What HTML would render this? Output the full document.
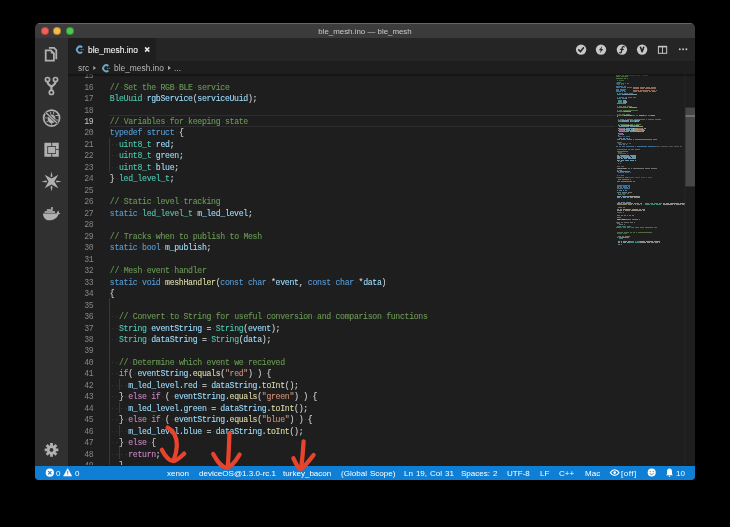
<!DOCTYPE html><html><head><meta charset="utf-8"><style>
*{margin:0;padding:0;box-sizing:border-box}
html,body{width:730px;height:527px;-webkit-font-smoothing:antialiased;background:#000000;overflow:hidden;font-family:"Liberation Sans",sans-serif}
.a{position:absolute}
#win{position:absolute;left:35px;top:22.9px;width:660px;height:457.1px;border-radius:5px 5px 4px 4px;overflow:hidden;background:#1e1e1e}
#title{left:0;top:0;width:100%;height:15.1px;background:linear-gradient(#3d3d3d,#3a3a3a);border-top:1px solid #666}
.dot{position:absolute;top:3.25px;width:7.9px;height:7.9px;border-radius:50%;border:0.6px solid rgba(0,0,0,.25)}
#act{left:0;top:15.1px;width:32.6px;height:427.6px;background:#303030}
#tabs{left:32.6px;right:0;top:15.1px;height:22.799999999999997px;background:#252525}
#tab{left:0;top:0;width:88.80px;height:100%;background:#1e1e1e}
#sb{left:0;right:0;top:442.70000000000005px;height:14.399999999999977px;background:#0f7fd5}
#ed{will-change:transform;position:absolute;left:67.6px;top:74.4px;width:627.4px;height:391.20000000000005px;overflow:hidden}
#ed .in{position:absolute;left:-67.6px;top:0;width:730px;height:600px}
#shadow{left:67.6px;top:74.4px;width:627.4px;height:3px;background:linear-gradient(rgba(0,0,0,.45),rgba(0,0,0,0))}
.lnum{position:absolute;left:53.0px;width:40px;text-align:right;height:11.475px;line-height:11.475px;font-family:"Liberation Mono",monospace;font-size:8.2px;letter-spacing:-0.310px}
.code{position:absolute;left:109.4px;height:11.475px;line-height:11.475px;font-family:"Liberation Mono",monospace;font-size:8.2px;white-space:pre;letter-spacing:-0.310px;-webkit-text-stroke:0.1px currentColor}
.code i{font-style:normal;color:#3a3a3a;-webkit-text-stroke:0}
.com{color:#6a9955} .kw{color:#569cd6} .ctl{color:#c586c0} .typ{color:#4ec9b0} .fn{color:#dcdcaa} .var{color:#9cdcfe} .str{color:#ce9178} .txt{color:#d4d4d4}
.ln{color:#858585} .lnA{color:#c6c6c6}
.guide{position:absolute;width:1px;height:11.575px;background:#383838}
#curline{position:absolute;left:108.4px;width:506.6px;height:11.475px;border-top:1px solid #2e2e2e;border-bottom:1px solid #2e2e2e}
.mm{position:absolute;opacity:.62}
.ui{will-change:transform;position:absolute;white-space:pre;line-height:1}
.sbt{will-change:transform;position:absolute;white-space:pre;color:#fff;font-size:8.05px;word-spacing:0.7px;line-height:1;top:469.80px}
</style></head><body>
<div id="win">
 <div id="title" class="a">
  <div class="dot" style="left:5.95px;background:#f5605a"></div>
  <div class="dot" style="left:18.45px;background:#f8bd48"></div>
  <div class="dot" style="left:30.95px;background:#4cc94f"></div>
 </div>
 <div id="act" class="a"></div>
 <div id="tabs" class="a"><div id="tab" class="a"></div></div>
 <div id="sb" class="a"></div>
</div>
<div class="ui" style="left:0;width:730px;text-align:center;top:27.60px;font-size:7.9px;color:#cacaca;padding-left:0px">ble_mesh.ino — ble_mesh</div>
<div class="ui" style="left:87.6px;top:45.80px;font-size:8.4px;color:#f0f0f0;-webkit-text-stroke:0.1px #fff">ble_mesh.ino</div>
<div class="ui" style="left:77.8px;top:63.70px;font-size:8.3px;color:#b8b8b8">src</div>
<div class="ui" style="left:113.8px;top:63.70px;font-size:8.4px;color:#b8b8b8">ble_mesh.ino</div>
<div class="ui" style="left:174.0px;top:63.70px;font-size:8.4px;color:#b8b8b8">...</div>
<div id="ed"><div class="in">
  <div id="curline" style="top:41.087px"></div>
  <div class="guide" style="left:108.90px;top:63.638px"></div><div class="guide" style="left:108.90px;top:75.112px"></div><div class="guide" style="left:108.90px;top:86.588px"></div><div class="guide" style="left:108.90px;top:224.287px"></div><div class="guide" style="left:108.90px;top:235.763px"></div><div class="guide" style="left:108.90px;top:247.237px"></div><div class="guide" style="left:108.90px;top:258.712px"></div><div class="guide" style="left:108.90px;top:270.188px"></div><div class="guide" style="left:108.90px;top:281.663px"></div><div class="guide" style="left:108.90px;top:293.138px"></div><div class="guide" style="left:108.90px;top:304.612px"></div><div class="guide" style="left:118.12px;top:304.612px"></div><div class="guide" style="left:108.90px;top:316.087px"></div><div class="guide" style="left:108.90px;top:327.562px"></div><div class="guide" style="left:118.12px;top:327.562px"></div><div class="guide" style="left:108.90px;top:339.038px"></div><div class="guide" style="left:108.90px;top:350.513px"></div><div class="guide" style="left:118.12px;top:350.513px"></div><div class="guide" style="left:108.90px;top:361.987px"></div><div class="guide" style="left:108.90px;top:373.462px"></div><div class="guide" style="left:118.12px;top:373.462px"></div><div class="guide" style="left:108.90px;top:384.938px"></div>
  <div class="lnum ln" style="top:-3.912px">15</div><div class="code" style="top:-3.912px"><span class="txt"></span></div><div class="lnum ln" style="top:7.563px">16</div><div class="code" style="top:7.563px"><span class="com">//<i>·</i>Set<i>·</i>the<i>·</i>RGB<i>·</i>BLE<i>·</i>service</span></div><div class="lnum ln" style="top:19.037px">17</div><div class="code" style="top:19.037px"><span class="typ">BleUuid</span><span class="txt"><i>·</i></span><span class="var">rgbService</span><span class="txt">(</span><span class="var">serviceUuid</span><span class="txt">);</span></div><div class="lnum ln" style="top:30.513px">18</div><div class="code" style="top:30.513px"></div><div class="lnum lnA" style="top:41.987px">19</div><div class="code" style="top:41.987px"><span class="com">//<i>·</i>Variables<i>·</i>for<i>·</i>keeping<i>·</i>state</span></div><div class="lnum ln" style="top:53.462px">20</div><div class="code" style="top:53.462px"><span class="kw">typedef</span><span class="txt"><i>·</i></span><span class="kw">struct</span><span class="txt"><i>·</i>{</span></div><div class="lnum ln" style="top:64.938px">21</div><div class="code" style="top:64.938px"><span class="txt"><i>·</i><i>·</i></span><span class="typ">uint8_t</span><span class="txt"><i>·</i></span><span class="var">red</span><span class="txt">;</span></div><div class="lnum ln" style="top:76.412px">22</div><div class="code" style="top:76.412px"><span class="txt"><i>·</i><i>·</i></span><span class="typ">uint8_t</span><span class="txt"><i>·</i></span><span class="var">green</span><span class="txt">;</span></div><div class="lnum ln" style="top:87.888px">23</div><div class="code" style="top:87.888px"><span class="txt"><i>·</i><i>·</i></span><span class="typ">uint8_t</span><span class="txt"><i>·</i></span><span class="var">blue</span><span class="txt">;</span></div><div class="lnum ln" style="top:99.362px">24</div><div class="code" style="top:99.362px"><span class="txt">}<i>·</i></span><span class="typ">led_level_t</span><span class="txt">;</span></div><div class="lnum ln" style="top:110.837px">25</div><div class="code" style="top:110.837px"></div><div class="lnum ln" style="top:122.313px">26</div><div class="code" style="top:122.313px"><span class="com">//<i>·</i>Static<i>·</i>level<i>·</i>tracking</span></div><div class="lnum ln" style="top:133.787px">27</div><div class="code" style="top:133.787px"><span class="kw">static</span><span class="txt"><i>·</i></span><span class="typ">led_level_t</span><span class="txt"><i>·</i></span><span class="var">m_led_level</span><span class="txt">;</span></div><div class="lnum ln" style="top:145.263px">28</div><div class="code" style="top:145.263px"></div><div class="lnum ln" style="top:156.737px">29</div><div class="code" style="top:156.737px"><span class="com">//<i>·</i>Tracks<i>·</i>when<i>·</i>to<i>·</i>publish<i>·</i>to<i>·</i>Mesh</span></div><div class="lnum ln" style="top:168.213px">30</div><div class="code" style="top:168.213px"><span class="kw">static</span><span class="txt"><i>·</i></span><span class="kw">bool</span><span class="txt"><i>·</i></span><span class="var">m_publish</span><span class="txt">;</span></div><div class="lnum ln" style="top:179.688px">31</div><div class="code" style="top:179.688px"></div><div class="lnum ln" style="top:191.162px">32</div><div class="code" style="top:191.162px"><span class="com">//<i>·</i>Mesh<i>·</i>event<i>·</i>handler</span></div><div class="lnum ln" style="top:202.638px">33</div><div class="code" style="top:202.638px"><span class="kw">static</span><span class="txt"><i>·</i></span><span class="kw">void</span><span class="txt"><i>·</i></span><span class="fn">meshHandler</span><span class="txt">(</span><span class="kw">const</span><span class="txt"><i>·</i></span><span class="kw">char</span><span class="txt"><i>·</i>*</span><span class="var">event</span><span class="txt">,<i>·</i></span><span class="kw">const</span><span class="txt"><i>·</i></span><span class="kw">char</span><span class="txt"><i>·</i>*</span><span class="var">data</span><span class="txt">)</span></div><div class="lnum ln" style="top:214.112px">34</div><div class="code" style="top:214.112px"><span class="txt">{</span></div><div class="lnum ln" style="top:225.588px">35</div><div class="code" style="top:225.588px"></div><div class="lnum ln" style="top:237.063px">36</div><div class="code" style="top:237.063px"><span class="txt"><i>·</i><i>·</i></span><span class="com">//<i>·</i>Convert<i>·</i>to<i>·</i>String<i>·</i>for<i>·</i>useful<i>·</i>conversion<i>·</i>and<i>·</i>comparison<i>·</i>functions</span></div><div class="lnum ln" style="top:248.537px">37</div><div class="code" style="top:248.537px"><span class="txt"><i>·</i><i>·</i></span><span class="typ">String</span><span class="txt"><i>·</i></span><span class="var">eventString</span><span class="txt"><i>·</i>=<i>·</i></span><span class="typ">String</span><span class="txt">(</span><span class="var">event</span><span class="txt">);</span></div><div class="lnum ln" style="top:260.012px">38</div><div class="code" style="top:260.012px"><span class="txt"><i>·</i><i>·</i></span><span class="typ">String</span><span class="txt"><i>·</i></span><span class="var">dataString</span><span class="txt"><i>·</i>=<i>·</i></span><span class="typ">String</span><span class="txt">(</span><span class="var">data</span><span class="txt">);</span></div><div class="lnum ln" style="top:271.488px">39</div><div class="code" style="top:271.488px"></div><div class="lnum ln" style="top:282.963px">40</div><div class="code" style="top:282.963px"><span class="txt"><i>·</i><i>·</i></span><span class="com">//<i>·</i>Determine<i>·</i>which<i>·</i>event<i>·</i>we<i>·</i>recieved</span></div><div class="lnum ln" style="top:294.438px">41</div><div class="code" style="top:294.438px"><span class="txt"><i>·</i><i>·</i></span><span class="ctl">if</span><span class="txt">(<i>·</i></span><span class="var">eventString</span><span class="txt">.</span><span class="fn">equals</span><span class="txt">(</span><span class="str">&quot;red&quot;</span><span class="txt">)<i>·</i>)<i>·</i>{</span></div><div class="lnum ln" style="top:305.912px">42</div><div class="code" style="top:305.912px"><span class="txt"><i>·</i><i>·</i><i>·</i><i>·</i></span><span class="var">m_led_level</span><span class="txt">.</span><span class="var">red</span><span class="txt"><i>·</i>=<i>·</i></span><span class="var">dataString</span><span class="txt">.</span><span class="fn">toInt</span><span class="txt">();</span></div><div class="lnum ln" style="top:317.387px">43</div><div class="code" style="top:317.387px"><span class="txt"><i>·</i><i>·</i>}<i>·</i></span><span class="ctl">else</span><span class="txt"><i>·</i></span><span class="ctl">if</span><span class="txt"><i>·</i>(<i>·</i></span><span class="var">eventString</span><span class="txt">.</span><span class="fn">equals</span><span class="txt">(</span><span class="str">&quot;green&quot;</span><span class="txt">)<i>·</i>)<i>·</i>{</span></div><div class="lnum ln" style="top:328.863px">44</div><div class="code" style="top:328.863px"><span class="txt"><i>·</i><i>·</i><i>·</i><i>·</i></span><span class="var">m_led_level</span><span class="txt">.</span><span class="var">green</span><span class="txt"><i>·</i>=<i>·</i></span><span class="var">dataString</span><span class="txt">.</span><span class="fn">toInt</span><span class="txt">();</span></div><div class="lnum ln" style="top:340.338px">45</div><div class="code" style="top:340.338px"><span class="txt"><i>·</i><i>·</i>}<i>·</i></span><span class="ctl">else</span><span class="txt"><i>·</i></span><span class="ctl">if</span><span class="txt"><i>·</i>(<i>·</i></span><span class="var">eventString</span><span class="txt">.</span><span class="fn">equals</span><span class="txt">(</span><span class="str">&quot;blue&quot;</span><span class="txt">)<i>·</i>)<i>·</i>{</span></div><div class="lnum ln" style="top:351.813px">46</div><div class="code" style="top:351.813px"><span class="txt"><i>·</i><i>·</i><i>·</i><i>·</i></span><span class="var">m_led_level</span><span class="txt">.</span><span class="var">blue</span><span class="txt"><i>·</i>=<i>·</i></span><span class="var">dataString</span><span class="txt">.</span><span class="fn">toInt</span><span class="txt">();</span></div><div class="lnum ln" style="top:363.287px">47</div><div class="code" style="top:363.287px"><span class="txt"><i>·</i><i>·</i>}<i>·</i></span><span class="ctl">else</span><span class="txt"><i>·</i>{</span></div><div class="lnum ln" style="top:374.762px">48</div><div class="code" style="top:374.762px"><span class="txt"><i>·</i><i>·</i><i>·</i><i>·</i></span><span class="ctl">return</span><span class="txt">;</span></div><div class="lnum ln" style="top:386.238px">49</div><div class="code" style="top:386.238px"><span class="txt"><i>·</i><i>·</i>}</span></div>
  <div class="mm" style="left:616.00px;top:1.10px;width:4.48px;height:1.0px;background:#6a9955"></div><div class="mm" style="left:621.12px;top:1.10px;width:2.56px;height:1.0px;background:#6a9955"></div><div class="mm" style="left:624.32px;top:1.10px;width:3.68px;height:1.0px;background:#6a9955"></div><div class="mm" style="left:616.00px;top:2.37px;width:1.28px;height:1.0px;background:#6a9955"></div><div class="mm" style="left:617.92px;top:2.37px;width:1.92px;height:1.0px;background:#6a9955"></div><div class="mm" style="left:620.48px;top:2.37px;width:1.92px;height:1.0px;background:#6a9955"></div><div class="mm" style="left:623.04px;top:2.37px;width:4.48px;height:1.0px;background:#6a9955"></div><div class="mm" style="left:616.00px;top:3.65px;width:1.28px;height:1.0px;background:#6a9955"></div><div class="mm" style="left:617.92px;top:3.65px;width:3.20px;height:1.0px;background:#6a9955"></div><div class="mm" style="left:621.76px;top:3.65px;width:1.28px;height:1.0px;background:#6a9955"></div><div class="mm" style="left:623.68px;top:3.65px;width:1.92px;height:1.0px;background:#6a9955"></div><div class="mm" style="left:626.24px;top:3.65px;width:1.76px;height:1.0px;background:#6a9955"></div><div class="mm" style="left:628.00px;top:1.10px;width:5.12px;height:1.0px;background:#55704a"></div><div class="mm" style="left:633.76px;top:1.10px;width:1.92px;height:1.0px;background:#55704a"></div><div class="mm" style="left:636.32px;top:1.10px;width:3.20px;height:1.0px;background:#55704a"></div><div class="mm" style="left:640.16px;top:1.10px;width:1.92px;height:1.0px;background:#55704a"></div><div class="mm" style="left:642.72px;top:1.10px;width:5.12px;height:1.0px;background:#55704a"></div><div class="mm" style="left:616.00px;top:8.60px;width:1.28px;height:1.0px;background:#6a9955"></div><div class="mm" style="left:617.92px;top:8.60px;width:1.92px;height:1.0px;background:#6a9955"></div><div class="mm" style="left:620.48px;top:8.60px;width:3.20px;height:1.0px;background:#6a9955"></div><div class="mm" style="left:624.32px;top:8.60px;width:1.28px;height:1.0px;background:#6a9955"></div><div class="mm" style="left:626.24px;top:8.60px;width:2.76px;height:1.0px;background:#6a9955"></div><div class="mm" style="left:616.00px;top:12.10px;width:1.28px;height:1.0px;background:#569cd6"></div><div class="mm" style="left:617.92px;top:12.10px;width:3.20px;height:1.0px;background:#569cd6"></div><div class="mm" style="left:621.76px;top:12.10px;width:1.28px;height:1.0px;background:#569cd6"></div><div class="mm" style="left:623.68px;top:12.10px;width:2.32px;height:1.0px;background:#569cd6"></div><div class="mm" style="left:616.00px;top:13.37px;width:3.84px;height:1.0px;background:#569cd6"></div><div class="mm" style="left:620.48px;top:13.37px;width:5.12px;height:1.0px;background:#569cd6"></div><div class="mm" style="left:616.00px;top:14.65px;width:2.56px;height:1.0px;background:#569cd6"></div><div class="mm" style="left:619.20px;top:14.65px;width:1.92px;height:1.0px;background:#569cd6"></div><div class="mm" style="left:621.76px;top:14.65px;width:3.84px;height:1.0px;background:#569cd6"></div><div class="mm" style="left:616.00px;top:15.92px;width:2.56px;height:1.0px;background:#569cd6"></div><div class="mm" style="left:619.20px;top:15.92px;width:1.92px;height:1.0px;background:#569cd6"></div><div class="mm" style="left:621.76px;top:15.92px;width:3.20px;height:1.0px;background:#569cd6"></div><div class="mm" style="left:616.00px;top:17.20px;width:4.48px;height:1.0px;background:#569cd6"></div><div class="mm" style="left:621.12px;top:17.20px;width:1.92px;height:1.0px;background:#569cd6"></div><div class="mm" style="left:623.68px;top:17.20px;width:1.92px;height:1.0px;background:#569cd6"></div><div class="mm" style="left:627.00px;top:12.60px;width:1.28px;height:1.0px;background:#888888"></div><div class="mm" style="left:628.92px;top:12.60px;width:3.08px;height:1.0px;background:#888888"></div><div class="mm" style="left:633.00px;top:13.10px;width:5.76px;height:1.0px;background:#ce9178"></div><div class="mm" style="left:639.40px;top:13.10px;width:5.12px;height:1.0px;background:#ce9178"></div><div class="mm" style="left:645.16px;top:13.10px;width:4.48px;height:1.0px;background:#ce9178"></div><div class="mm" style="left:650.28px;top:13.10px;width:5.72px;height:1.0px;background:#ce9178"></div><div class="mm" style="left:633.00px;top:14.37px;width:5.76px;height:1.0px;background:#ce9178"></div><div class="mm" style="left:639.40px;top:14.37px;width:4.48px;height:1.0px;background:#ce9178"></div><div class="mm" style="left:644.52px;top:14.37px;width:3.84px;height:1.0px;background:#ce9178"></div><div class="mm" style="left:649.00px;top:14.37px;width:3.20px;height:1.0px;background:#ce9178"></div><div class="mm" style="left:652.84px;top:14.37px;width:2.56px;height:1.0px;background:#ce9178"></div><div class="mm" style="left:633.00px;top:15.65px;width:3.20px;height:1.0px;background:#ce9178"></div><div class="mm" style="left:636.84px;top:15.65px;width:1.92px;height:1.0px;background:#ce9178"></div><div class="mm" style="left:639.40px;top:15.65px;width:3.84px;height:1.0px;background:#ce9178"></div><div class="mm" style="left:643.88px;top:15.65px;width:5.76px;height:1.0px;background:#ce9178"></div><div class="mm" style="left:650.28px;top:15.65px;width:4.48px;height:1.0px;background:#ce9178"></div><div class="mm" style="left:655.40px;top:15.65px;width:0.60px;height:1.0px;background:#ce9178"></div><div class="mm" style="left:633.00px;top:16.92px;width:3.84px;height:1.0px;background:#ce9178"></div><div class="mm" style="left:637.48px;top:16.92px;width:1.92px;height:1.0px;background:#ce9178"></div><div class="mm" style="left:640.04px;top:16.92px;width:1.92px;height:1.0px;background:#ce9178"></div><div class="mm" style="left:642.60px;top:16.92px;width:5.12px;height:1.0px;background:#ce9178"></div><div class="mm" style="left:648.36px;top:16.92px;width:2.56px;height:1.0px;background:#ce9178"></div><div class="mm" style="left:651.56px;top:16.92px;width:4.44px;height:1.0px;background:#ce9178"></div><div class="mm" style="left:617.00px;top:65.10px;width:2.56px;height:1.0px;background:#a0a0a0"></div><div class="mm" style="left:620.20px;top:65.10px;width:5.76px;height:1.0px;background:#a0a0a0"></div><div class="mm" style="left:626.60px;top:65.10px;width:5.12px;height:1.0px;background:#a0a0a0"></div><div class="mm" style="left:632.36px;top:65.10px;width:1.28px;height:1.0px;background:#a0a0a0"></div><div class="mm" style="left:634.28px;top:65.10px;width:1.92px;height:1.0px;background:#a0a0a0"></div><div class="mm" style="left:636.84px;top:65.10px;width:4.48px;height:1.0px;background:#a0a0a0"></div><div class="mm" style="left:641.96px;top:65.10px;width:4.48px;height:1.0px;background:#a0a0a0"></div><div class="mm" style="left:647.08px;top:65.10px;width:4.48px;height:1.0px;background:#a0a0a0"></div><div class="mm" style="left:652.20px;top:65.10px;width:4.80px;height:1.0px;background:#a0a0a0"></div><div class="mm" style="left:617.00px;top:67.60px;width:5.00px;height:1.0px;background:#808080"></div><div class="mm" style="left:616.00px;top:71.60px;width:1.92px;height:1.0px;background:#569cd6"></div><div class="mm" style="left:618.56px;top:71.60px;width:1.92px;height:1.0px;background:#569cd6"></div><div class="mm" style="left:621.12px;top:71.60px;width:3.84px;height:1.0px;background:#569cd6"></div><div class="mm" style="left:625.60px;top:71.60px;width:5.76px;height:1.0px;background:#569cd6"></div><div class="mm" style="left:632.00px;top:71.60px;width:1.92px;height:1.0px;background:#569cd6"></div><div class="mm" style="left:634.56px;top:71.60px;width:1.28px;height:1.0px;background:#569cd6"></div><div class="mm" style="left:636.48px;top:71.60px;width:3.84px;height:1.0px;background:#569cd6"></div><div class="mm" style="left:640.96px;top:71.60px;width:5.76px;height:1.0px;background:#569cd6"></div><div class="mm" style="left:647.36px;top:71.60px;width:3.84px;height:1.0px;background:#569cd6"></div><div class="mm" style="left:651.84px;top:71.60px;width:3.16px;height:1.0px;background:#569cd6"></div><div class="mm" style="left:655.00px;top:71.60px;width:4.48px;height:1.0px;background:#707070"></div><div class="mm" style="left:660.12px;top:71.60px;width:1.28px;height:1.0px;background:#707070"></div><div class="mm" style="left:662.04px;top:71.60px;width:5.76px;height:1.0px;background:#707070"></div><div class="mm" style="left:668.44px;top:71.60px;width:4.48px;height:1.0px;background:#707070"></div><div class="mm" style="left:673.56px;top:71.60px;width:2.56px;height:1.0px;background:#707070"></div><div class="mm" style="left:676.76px;top:71.60px;width:1.92px;height:1.0px;background:#707070"></div><div class="mm" style="left:679.32px;top:71.60px;width:2.68px;height:1.0px;background:#707070"></div><div class="mm" style="left:617.00px;top:74.60px;width:1.28px;height:1.0px;background:#6a9955"></div><div class="mm" style="left:618.92px;top:74.60px;width:3.20px;height:1.0px;background:#6a9955"></div><div class="mm" style="left:622.76px;top:74.60px;width:3.84px;height:1.0px;background:#6a9955"></div><div class="mm" style="left:627.24px;top:74.60px;width:2.56px;height:1.0px;background:#6a9955"></div><div class="mm" style="left:630.44px;top:74.60px;width:3.20px;height:1.0px;background:#6a9955"></div><div class="mm" style="left:634.28px;top:74.60px;width:5.12px;height:1.0px;background:#6a9955"></div><div class="mm" style="left:617.00px;top:76.60px;width:5.12px;height:1.0px;background:#909090"></div><div class="mm" style="left:622.76px;top:76.60px;width:5.24px;height:1.0px;background:#909090"></div><div class="mm" style="left:617.00px;top:80.60px;width:1.92px;height:1.0px;background:#9cdcfe"></div><div class="mm" style="left:619.56px;top:80.60px;width:2.56px;height:1.0px;background:#9cdcfe"></div><div class="mm" style="left:622.76px;top:80.60px;width:5.76px;height:1.0px;background:#9cdcfe"></div><div class="mm" style="left:629.16px;top:80.60px;width:5.12px;height:1.0px;background:#9cdcfe"></div><div class="mm" style="left:634.92px;top:80.60px;width:1.08px;height:1.0px;background:#9cdcfe"></div><div class="mm" style="left:617.00px;top:81.88px;width:2.56px;height:1.0px;background:#9cdcfe"></div><div class="mm" style="left:620.20px;top:81.88px;width:5.12px;height:1.0px;background:#9cdcfe"></div><div class="mm" style="left:625.96px;top:81.88px;width:3.84px;height:1.0px;background:#9cdcfe"></div><div class="mm" style="left:630.44px;top:81.88px;width:5.12px;height:1.0px;background:#9cdcfe"></div><div class="mm" style="left:617.00px;top:83.15px;width:4.48px;height:1.0px;background:#9cdcfe"></div><div class="mm" style="left:622.12px;top:83.15px;width:5.12px;height:1.0px;background:#9cdcfe"></div><div class="mm" style="left:627.88px;top:83.15px;width:3.20px;height:1.0px;background:#9cdcfe"></div><div class="mm" style="left:631.72px;top:83.15px;width:2.56px;height:1.0px;background:#9cdcfe"></div><div class="mm" style="left:634.92px;top:83.15px;width:1.08px;height:1.0px;background:#9cdcfe"></div><div class="mm" style="left:617.00px;top:84.42px;width:2.56px;height:1.0px;background:#9cdcfe"></div><div class="mm" style="left:620.20px;top:84.42px;width:2.56px;height:1.0px;background:#9cdcfe"></div><div class="mm" style="left:623.40px;top:84.42px;width:3.20px;height:1.0px;background:#9cdcfe"></div><div class="mm" style="left:627.24px;top:84.42px;width:3.20px;height:1.0px;background:#9cdcfe"></div><div class="mm" style="left:631.08px;top:84.42px;width:1.28px;height:1.0px;background:#9cdcfe"></div><div class="mm" style="left:633.00px;top:84.42px;width:3.00px;height:1.0px;background:#9cdcfe"></div><div class="mm" style="left:617.00px;top:85.70px;width:2.56px;height:1.0px;background:#9cdcfe"></div><div class="mm" style="left:620.20px;top:85.70px;width:3.84px;height:1.0px;background:#9cdcfe"></div><div class="mm" style="left:624.68px;top:85.70px;width:3.84px;height:1.0px;background:#9cdcfe"></div><div class="mm" style="left:629.16px;top:85.70px;width:1.28px;height:1.0px;background:#9cdcfe"></div><div class="mm" style="left:631.08px;top:85.70px;width:2.56px;height:1.0px;background:#9cdcfe"></div><div class="mm" style="left:634.28px;top:85.70px;width:1.72px;height:1.0px;background:#9cdcfe"></div><div class="mm" style="left:617.00px;top:93.60px;width:4.48px;height:1.0px;background:#a0a0a0"></div><div class="mm" style="left:622.12px;top:93.60px;width:4.48px;height:1.0px;background:#a0a0a0"></div><div class="mm" style="left:627.24px;top:93.60px;width:2.56px;height:1.0px;background:#a0a0a0"></div><div class="mm" style="left:630.44px;top:93.60px;width:1.28px;height:1.0px;background:#a0a0a0"></div><div class="mm" style="left:632.36px;top:93.60px;width:5.76px;height:1.0px;background:#a0a0a0"></div><div class="mm" style="left:638.76px;top:93.60px;width:5.12px;height:1.0px;background:#a0a0a0"></div><div class="mm" style="left:644.52px;top:93.60px;width:5.12px;height:1.0px;background:#a0a0a0"></div><div class="mm" style="left:650.28px;top:93.60px;width:5.12px;height:1.0px;background:#a0a0a0"></div><div class="mm" style="left:656.04px;top:93.60px;width:0.96px;height:1.0px;background:#a0a0a0"></div><div class="mm" style="left:617.00px;top:97.10px;width:1.92px;height:1.0px;background:#b0b0b0"></div><div class="mm" style="left:619.56px;top:97.10px;width:5.76px;height:1.0px;background:#b0b0b0"></div><div class="mm" style="left:625.96px;top:97.10px;width:4.04px;height:1.0px;background:#b0b0b0"></div><div class="mm" style="left:616.00px;top:102.60px;width:1.28px;height:1.0px;background:#55704a"></div><div class="mm" style="left:617.92px;top:102.60px;width:3.20px;height:1.0px;background:#55704a"></div><div class="mm" style="left:621.76px;top:102.60px;width:1.92px;height:1.0px;background:#55704a"></div><div class="mm" style="left:624.32px;top:102.60px;width:3.20px;height:1.0px;background:#55704a"></div><div class="mm" style="left:628.16px;top:102.60px;width:5.76px;height:1.0px;background:#55704a"></div><div class="mm" style="left:634.56px;top:102.60px;width:2.56px;height:1.0px;background:#55704a"></div><div class="mm" style="left:637.76px;top:102.60px;width:1.92px;height:1.0px;background:#55704a"></div><div class="mm" style="left:640.32px;top:102.60px;width:4.48px;height:1.0px;background:#55704a"></div><div class="mm" style="left:645.44px;top:102.60px;width:1.28px;height:1.0px;background:#55704a"></div><div class="mm" style="left:647.36px;top:102.60px;width:1.92px;height:1.0px;background:#55704a"></div><div class="mm" style="left:649.92px;top:102.60px;width:1.28px;height:1.0px;background:#55704a"></div><div class="mm" style="left:617.00px;top:107.10px;width:2.56px;height:1.0px;background:#a0a0a0"></div><div class="mm" style="left:620.20px;top:107.10px;width:1.92px;height:1.0px;background:#a0a0a0"></div><div class="mm" style="left:622.76px;top:107.10px;width:4.48px;height:1.0px;background:#a0a0a0"></div><div class="mm" style="left:627.88px;top:107.10px;width:1.28px;height:1.0px;background:#a0a0a0"></div><div class="mm" style="left:629.80px;top:107.10px;width:1.92px;height:1.0px;background:#a0a0a0"></div><div class="mm" style="left:632.36px;top:107.10px;width:2.64px;height:1.0px;background:#a0a0a0"></div><div class="mm" style="left:617.00px;top:110.60px;width:5.12px;height:1.0px;background:#569cd6"></div><div class="mm" style="left:622.76px;top:110.60px;width:2.56px;height:1.0px;background:#569cd6"></div><div class="mm" style="left:625.96px;top:110.60px;width:3.84px;height:1.0px;background:#569cd6"></div><div class="mm" style="left:617.00px;top:111.88px;width:4.48px;height:1.0px;background:#569cd6"></div><div class="mm" style="left:622.12px;top:111.88px;width:4.48px;height:1.0px;background:#569cd6"></div><div class="mm" style="left:627.24px;top:111.88px;width:2.76px;height:1.0px;background:#569cd6"></div><div class="mm" style="left:617.00px;top:113.15px;width:1.92px;height:1.0px;background:#569cd6"></div><div class="mm" style="left:619.56px;top:113.15px;width:1.92px;height:1.0px;background:#569cd6"></div><div class="mm" style="left:622.12px;top:113.15px;width:5.76px;height:1.0px;background:#569cd6"></div><div class="mm" style="left:628.52px;top:113.15px;width:1.48px;height:1.0px;background:#569cd6"></div><div class="mm" style="left:617.00px;top:114.42px;width:5.76px;height:1.0px;background:#569cd6"></div><div class="mm" style="left:623.40px;top:114.42px;width:5.76px;height:1.0px;background:#569cd6"></div><div class="mm" style="left:617.00px;top:117.60px;width:3.84px;height:1.0px;background:#a0a0a0"></div><div class="mm" style="left:621.48px;top:117.60px;width:1.92px;height:1.0px;background:#a0a0a0"></div><div class="mm" style="left:624.04px;top:117.60px;width:2.56px;height:1.0px;background:#a0a0a0"></div><div class="mm" style="left:627.24px;top:117.60px;width:1.92px;height:1.0px;background:#a0a0a0"></div><div class="mm" style="left:629.80px;top:117.60px;width:2.20px;height:1.0px;background:#a0a0a0"></div><div class="mm" style="left:617.00px;top:121.60px;width:3.84px;height:1.0px;background:#9cdcfe"></div><div class="mm" style="left:621.48px;top:121.60px;width:5.76px;height:1.0px;background:#9cdcfe"></div><div class="mm" style="left:627.88px;top:121.60px;width:2.56px;height:1.0px;background:#9cdcfe"></div><div class="mm" style="left:631.08px;top:121.60px;width:1.28px;height:1.0px;background:#9cdcfe"></div><div class="mm" style="left:633.00px;top:121.60px;width:3.20px;height:1.0px;background:#9cdcfe"></div><div class="mm" style="left:636.84px;top:121.60px;width:3.16px;height:1.0px;background:#9cdcfe"></div><div class="mm" style="left:617.00px;top:122.88px;width:2.56px;height:1.0px;background:#9cdcfe"></div><div class="mm" style="left:620.20px;top:122.88px;width:1.28px;height:1.0px;background:#9cdcfe"></div><div class="mm" style="left:622.12px;top:122.88px;width:3.84px;height:1.0px;background:#9cdcfe"></div><div class="mm" style="left:626.60px;top:122.88px;width:1.92px;height:1.0px;background:#9cdcfe"></div><div class="mm" style="left:629.16px;top:122.88px;width:3.84px;height:1.0px;background:#9cdcfe"></div><div class="mm" style="left:633.64px;top:122.88px;width:4.48px;height:1.0px;background:#9cdcfe"></div><div class="mm" style="left:638.76px;top:122.88px;width:1.24px;height:1.0px;background:#9cdcfe"></div><div class="mm" style="left:630.00px;top:122.10px;width:4.48px;height:1.0px;background:#ce9178"></div><div class="mm" style="left:635.12px;top:122.10px;width:0.88px;height:1.0px;background:#ce9178"></div><div class="mm" style="left:617.00px;top:128.60px;width:4.48px;height:1.0px;background:#c8b88a"></div><div class="mm" style="left:622.12px;top:128.60px;width:3.20px;height:1.0px;background:#c8b88a"></div><div class="mm" style="left:625.96px;top:128.60px;width:3.20px;height:1.0px;background:#c8b88a"></div><div class="mm" style="left:629.80px;top:128.60px;width:3.20px;height:1.0px;background:#c8b88a"></div><div class="mm" style="left:633.64px;top:128.60px;width:5.12px;height:1.0px;background:#c8b88a"></div><div class="mm" style="left:639.40px;top:128.60px;width:2.60px;height:1.0px;background:#c8b88a"></div><div class="mm" style="left:617.00px;top:129.88px;width:3.20px;height:1.0px;background:#c8b88a"></div><div class="mm" style="left:620.84px;top:129.88px;width:5.76px;height:1.0px;background:#c8b88a"></div><div class="mm" style="left:627.24px;top:129.88px;width:4.48px;height:1.0px;background:#c8b88a"></div><div class="mm" style="left:632.36px;top:129.88px;width:1.28px;height:1.0px;background:#c8b88a"></div><div class="mm" style="left:634.28px;top:129.88px;width:1.28px;height:1.0px;background:#c8b88a"></div><div class="mm" style="left:636.20px;top:129.88px;width:3.84px;height:1.0px;background:#c8b88a"></div><div class="mm" style="left:640.68px;top:129.88px;width:1.32px;height:1.0px;background:#c8b88a"></div><div class="mm" style="left:645.00px;top:128.60px;width:3.84px;height:1.0px;background:#4ec9b0"></div><div class="mm" style="left:649.48px;top:128.60px;width:3.20px;height:1.0px;background:#4ec9b0"></div><div class="mm" style="left:653.32px;top:128.60px;width:4.48px;height:1.0px;background:#4ec9b0"></div><div class="mm" style="left:658.44px;top:128.60px;width:3.56px;height:1.0px;background:#4ec9b0"></div><div class="mm" style="left:645.00px;top:129.88px;width:4.48px;height:1.0px;background:#4ec9b0"></div><div class="mm" style="left:650.12px;top:129.88px;width:4.48px;height:1.0px;background:#4ec9b0"></div><div class="mm" style="left:655.24px;top:129.88px;width:1.92px;height:1.0px;background:#4ec9b0"></div><div class="mm" style="left:657.80px;top:129.88px;width:3.20px;height:1.0px;background:#4ec9b0"></div><div class="mm" style="left:663.00px;top:128.60px;width:1.92px;height:1.0px;background:#d0d0d0"></div><div class="mm" style="left:665.56px;top:128.60px;width:3.20px;height:1.0px;background:#d0d0d0"></div><div class="mm" style="left:669.40px;top:128.60px;width:5.76px;height:1.0px;background:#d0d0d0"></div><div class="mm" style="left:675.80px;top:128.60px;width:3.20px;height:1.0px;background:#d0d0d0"></div><div class="mm" style="left:679.64px;top:128.60px;width:4.48px;height:1.0px;background:#d0d0d0"></div><div class="mm" style="left:663.00px;top:129.88px;width:3.20px;height:1.0px;background:#d0d0d0"></div><div class="mm" style="left:666.84px;top:129.88px;width:5.76px;height:1.0px;background:#d0d0d0"></div><div class="mm" style="left:673.24px;top:129.88px;width:1.28px;height:1.0px;background:#d0d0d0"></div><div class="mm" style="left:675.16px;top:129.88px;width:5.76px;height:1.0px;background:#d0d0d0"></div><div class="mm" style="left:681.56px;top:129.88px;width:3.44px;height:1.0px;background:#d0d0d0"></div><div class="mm" style="left:617.00px;top:135.10px;width:1.92px;height:1.0px;background:#d0c8a0"></div><div class="mm" style="left:619.56px;top:135.10px;width:1.92px;height:1.0px;background:#d0c8a0"></div><div class="mm" style="left:622.12px;top:135.10px;width:5.12px;height:1.0px;background:#d0c8a0"></div><div class="mm" style="left:627.88px;top:135.10px;width:3.20px;height:1.0px;background:#d0c8a0"></div><div class="mm" style="left:631.72px;top:135.10px;width:5.76px;height:1.0px;background:#d0c8a0"></div><div class="mm" style="left:638.12px;top:135.10px;width:2.56px;height:1.0px;background:#d0c8a0"></div><div class="mm" style="left:641.32px;top:135.10px;width:3.68px;height:1.0px;background:#d0c8a0"></div><div class="mm" style="left:617.00px;top:136.38px;width:4.48px;height:1.0px;background:#d0c8a0"></div><div class="mm" style="left:622.12px;top:136.38px;width:1.92px;height:1.0px;background:#d0c8a0"></div><div class="mm" style="left:624.68px;top:136.38px;width:5.12px;height:1.0px;background:#d0c8a0"></div><div class="mm" style="left:630.44px;top:136.38px;width:5.76px;height:1.0px;background:#d0c8a0"></div><div class="mm" style="left:636.84px;top:136.38px;width:5.12px;height:1.0px;background:#d0c8a0"></div><div class="mm" style="left:642.60px;top:136.38px;width:1.92px;height:1.0px;background:#d0c8a0"></div><div class="mm" style="left:617.00px;top:140.60px;width:2.56px;height:1.0px;background:#a0a0a0"></div><div class="mm" style="left:620.20px;top:140.60px;width:2.56px;height:1.0px;background:#a0a0a0"></div><div class="mm" style="left:623.40px;top:140.60px;width:2.56px;height:1.0px;background:#a0a0a0"></div><div class="mm" style="left:626.60px;top:140.60px;width:1.28px;height:1.0px;background:#a0a0a0"></div><div class="mm" style="left:628.52px;top:140.60px;width:2.56px;height:1.0px;background:#a0a0a0"></div><div class="mm" style="left:631.72px;top:140.60px;width:2.28px;height:1.0px;background:#a0a0a0"></div><div class="mm" style="left:617.00px;top:144.60px;width:2.56px;height:1.0px;background:#a0a0a0"></div><div class="mm" style="left:620.20px;top:144.60px;width:5.76px;height:1.0px;background:#a0a0a0"></div><div class="mm" style="left:626.60px;top:144.60px;width:4.48px;height:1.0px;background:#a0a0a0"></div><div class="mm" style="left:631.72px;top:144.60px;width:2.56px;height:1.0px;background:#a0a0a0"></div><div class="mm" style="left:634.92px;top:144.60px;width:2.56px;height:1.0px;background:#a0a0a0"></div><div class="mm" style="left:638.12px;top:144.60px;width:1.28px;height:1.0px;background:#a0a0a0"></div><div class="mm" style="left:616.00px;top:148.10px;width:1.28px;height:1.0px;background:#909090"></div><div class="mm" style="left:617.92px;top:148.10px;width:1.92px;height:1.0px;background:#909090"></div><div class="mm" style="left:620.48px;top:148.10px;width:2.56px;height:1.0px;background:#909090"></div><div class="mm" style="left:623.68px;top:148.10px;width:5.12px;height:1.0px;background:#909090"></div><div class="mm" style="left:629.44px;top:148.10px;width:3.20px;height:1.0px;background:#909090"></div><div class="mm" style="left:633.28px;top:148.10px;width:0.72px;height:1.0px;background:#909090"></div><div class="mm" style="left:616.00px;top:152.60px;width:1.28px;height:1.0px;background:#6a9955"></div><div class="mm" style="left:617.92px;top:152.60px;width:3.84px;height:1.0px;background:#6a9955"></div><div class="mm" style="left:622.40px;top:152.60px;width:3.20px;height:1.0px;background:#6a9955"></div><div class="mm" style="left:626.24px;top:152.60px;width:3.84px;height:1.0px;background:#6a9955"></div><div class="mm" style="left:630.72px;top:152.60px;width:3.20px;height:1.0px;background:#6a9955"></div><div class="mm" style="left:634.56px;top:152.60px;width:4.48px;height:1.0px;background:#6a9955"></div><div class="mm" style="left:639.68px;top:152.60px;width:3.84px;height:1.0px;background:#6a9955"></div><div class="mm" style="left:644.16px;top:152.60px;width:5.12px;height:1.0px;background:#6a9955"></div><div class="mm" style="left:649.92px;top:152.60px;width:2.56px;height:1.0px;background:#6a9955"></div><div class="mm" style="left:653.12px;top:152.60px;width:1.28px;height:1.0px;background:#6a9955"></div><div class="mm" style="left:655.04px;top:152.60px;width:1.96px;height:1.0px;background:#6a9955"></div><div class="mm" style="left:617.00px;top:157.60px;width:5.76px;height:1.0px;background:#6a9955"></div><div class="mm" style="left:623.40px;top:157.60px;width:5.12px;height:1.0px;background:#6a9955"></div><div class="mm" style="left:629.16px;top:157.60px;width:2.56px;height:1.0px;background:#6a9955"></div><div class="mm" style="left:632.36px;top:157.60px;width:2.56px;height:1.0px;background:#6a9955"></div><div class="mm" style="left:635.56px;top:157.60px;width:1.28px;height:1.0px;background:#6a9955"></div><div class="mm" style="left:637.48px;top:157.60px;width:5.76px;height:1.0px;background:#6a9955"></div><div class="mm" style="left:643.88px;top:157.60px;width:2.56px;height:1.0px;background:#6a9955"></div><div class="mm" style="left:647.08px;top:157.60px;width:1.28px;height:1.0px;background:#6a9955"></div><div class="mm" style="left:649.00px;top:157.60px;width:2.56px;height:1.0px;background:#6a9955"></div><div class="mm" style="left:618.00px;top:161.60px;width:2.56px;height:1.0px;background:#a0a0a0"></div><div class="mm" style="left:621.20px;top:161.60px;width:2.56px;height:1.0px;background:#a0a0a0"></div><div class="mm" style="left:624.40px;top:161.60px;width:5.60px;height:1.0px;background:#a0a0a0"></div><div class="mm" style="left:618.00px;top:166.60px;width:1.92px;height:1.0px;background:#9cdcfe"></div><div class="mm" style="left:620.56px;top:166.60px;width:1.28px;height:1.0px;background:#9cdcfe"></div><div class="mm" style="left:622.48px;top:166.60px;width:4.48px;height:1.0px;background:#9cdcfe"></div><div class="mm" style="left:627.60px;top:166.60px;width:2.40px;height:1.0px;background:#9cdcfe"></div><div class="mm" style="left:618.00px;top:167.88px;width:1.92px;height:1.0px;background:#9cdcfe"></div><div class="mm" style="left:620.56px;top:167.88px;width:1.28px;height:1.0px;background:#9cdcfe"></div><div class="mm" style="left:622.48px;top:167.88px;width:3.20px;height:1.0px;background:#9cdcfe"></div><div class="mm" style="left:626.32px;top:167.88px;width:3.20px;height:1.0px;background:#9cdcfe"></div><div class="mm" style="left:630.00px;top:166.60px;width:3.84px;height:1.0px;background:#4ec9b0"></div><div class="mm" style="left:634.48px;top:166.60px;width:1.28px;height:1.0px;background:#4ec9b0"></div><div class="mm" style="left:636.40px;top:166.60px;width:1.92px;height:1.0px;background:#4ec9b0"></div><div class="mm" style="left:638.96px;top:166.60px;width:1.04px;height:1.0px;background:#4ec9b0"></div><div class="mm" style="left:630.00px;top:167.88px;width:1.28px;height:1.0px;background:#4ec9b0"></div><div class="mm" style="left:631.92px;top:167.88px;width:1.92px;height:1.0px;background:#4ec9b0"></div><div class="mm" style="left:634.48px;top:167.88px;width:5.52px;height:1.0px;background:#4ec9b0"></div><div class="mm" style="left:640.00px;top:166.60px;width:4.48px;height:1.0px;background:#d0d0d0"></div><div class="mm" style="left:645.12px;top:166.60px;width:3.20px;height:1.0px;background:#d0d0d0"></div><div class="mm" style="left:648.96px;top:166.60px;width:3.84px;height:1.0px;background:#d0d0d0"></div><div class="mm" style="left:653.44px;top:166.60px;width:5.76px;height:1.0px;background:#d0d0d0"></div><div class="mm" style="left:640.00px;top:167.88px;width:5.76px;height:1.0px;background:#d0d0d0"></div><div class="mm" style="left:646.40px;top:167.88px;width:3.20px;height:1.0px;background:#d0d0d0"></div><div class="mm" style="left:650.24px;top:167.88px;width:3.84px;height:1.0px;background:#d0d0d0"></div><div class="mm" style="left:654.72px;top:167.88px;width:3.20px;height:1.0px;background:#d0d0d0"></div><div class="mm" style="left:658.56px;top:167.88px;width:1.44px;height:1.0px;background:#d0d0d0"></div><div class="mm" style="left:616.30px;top:6.38px;width:1.28px;height:1.0px;background:#6a9955;opacity:.5"></div><div class="mm" style="left:618.22px;top:6.38px;width:1.92px;height:1.0px;background:#6a9955;opacity:.5"></div><div class="mm" style="left:620.78px;top:6.38px;width:2.56px;height:1.0px;background:#6a9955;opacity:.5"></div><div class="mm" style="left:616.30px;top:7.65px;width:4.48px;height:1.0px;background:#4ec9b0;opacity:.5"></div><div class="mm" style="left:616.30px;top:10.20px;width:3.20px;height:1.0px;background:#569cd6;opacity:.5"></div><div class="mm" style="left:620.14px;top:10.20px;width:1.92px;height:1.0px;background:#569cd6;opacity:.5"></div><div class="mm" style="left:622.70px;top:10.20px;width:1.28px;height:1.0px;background:#569cd6;opacity:.5"></div><div class="mm" style="left:617.58px;top:62.47px;width:4.48px;height:1.0px;background:#569cd6;opacity:.5"></div><div class="mm" style="left:622.70px;top:62.47px;width:1.92px;height:1.0px;background:#569cd6;opacity:.5"></div><div class="mm" style="left:625.26px;top:62.47px;width:1.92px;height:1.0px;background:#569cd6;opacity:.5"></div><div class="mm" style="left:627.82px;top:62.47px;width:1.92px;height:1.0px;background:#569cd6;opacity:.5"></div><div class="mm" style="left:618.86px;top:63.75px;width:3.20px;height:1.0px;background:#9cdcfe;opacity:.5"></div><div class="mm" style="left:622.70px;top:63.75px;width:1.92px;height:1.0px;background:#9cdcfe;opacity:.5"></div><div class="mm" style="left:625.26px;top:63.75px;width:2.56px;height:1.0px;background:#9cdcfe;opacity:.5"></div><div class="mm" style="left:628.46px;top:63.75px;width:0.64px;height:1.0px;background:#9cdcfe;opacity:.5"></div><div class="mm" style="left:617.58px;top:68.85px;width:3.20px;height:1.0px;background:#6a9955;opacity:.5"></div><div class="mm" style="left:621.42px;top:68.85px;width:4.48px;height:1.0px;background:#6a9955;opacity:.5"></div><div class="mm" style="left:626.54px;top:68.85px;width:1.28px;height:1.0px;background:#6a9955;opacity:.5"></div><div class="mm" style="left:628.46px;top:68.85px;width:2.56px;height:1.0px;background:#6a9955;opacity:.5"></div><div class="mm" style="left:618.86px;top:70.12px;width:1.28px;height:1.0px;background:#b0b0b0;opacity:.5"></div><div class="mm" style="left:620.78px;top:70.12px;width:1.28px;height:1.0px;background:#b0b0b0;opacity:.5"></div><div class="mm" style="left:622.70px;top:70.12px;width:1.92px;height:1.0px;background:#b0b0b0;opacity:.5"></div><div class="mm" style="left:625.26px;top:70.12px;width:1.28px;height:1.0px;background:#b0b0b0;opacity:.5"></div><div class="mm" style="left:627.18px;top:70.12px;width:0.00px;height:1.0px;background:#b0b0b0;opacity:.5"></div><div class="mm" style="left:617.58px;top:77.78px;width:4.48px;height:1.0px;background:#6a9955;opacity:.5"></div><div class="mm" style="left:617.58px;top:79.05px;width:3.84px;height:1.0px;background:#569cd6;opacity:.5"></div><div class="mm" style="left:622.06px;top:79.05px;width:3.84px;height:1.0px;background:#569cd6;opacity:.5"></div><div class="mm" style="left:626.54px;top:79.05px;width:1.28px;height:1.0px;background:#569cd6;opacity:.5"></div><div class="mm" style="left:617.58px;top:86.70px;width:1.28px;height:1.0px;background:#9cdcfe;opacity:.5"></div><div class="mm" style="left:619.50px;top:86.70px;width:1.92px;height:1.0px;background:#9cdcfe;opacity:.5"></div><div class="mm" style="left:617.58px;top:89.25px;width:1.28px;height:1.0px;background:#4ec9b0;opacity:.5"></div><div class="mm" style="left:619.50px;top:89.25px;width:0.64px;height:1.0px;background:#4ec9b0;opacity:.5"></div><div class="mm" style="left:616.30px;top:91.80px;width:3.20px;height:1.0px;background:#9a9a9a;opacity:.5"></div><div class="mm" style="left:620.14px;top:91.80px;width:1.28px;height:1.0px;background:#9a9a9a;opacity:.5"></div><div class="mm" style="left:622.06px;top:91.80px;width:1.92px;height:1.0px;background:#9a9a9a;opacity:.5"></div><div class="mm" style="left:617.58px;top:94.35px;width:1.92px;height:1.0px;background:#b0b0b0;opacity:.5"></div><div class="mm" style="left:620.14px;top:94.35px;width:1.28px;height:1.0px;background:#b0b0b0;opacity:.5"></div><div class="mm" style="left:622.06px;top:94.35px;width:3.20px;height:1.0px;background:#b0b0b0;opacity:.5"></div><div class="mm" style="left:616.30px;top:95.62px;width:1.28px;height:1.0px;background:#9cdcfe;opacity:.5"></div><div class="mm" style="left:618.22px;top:95.62px;width:1.92px;height:1.0px;background:#9cdcfe;opacity:.5"></div><div class="mm" style="left:620.78px;top:95.62px;width:1.28px;height:1.0px;background:#9cdcfe;opacity:.5"></div><div class="mm" style="left:617.58px;top:98.17px;width:2.56px;height:1.0px;background:#569cd6;opacity:.5"></div><div class="mm" style="left:620.78px;top:98.17px;width:3.20px;height:1.0px;background:#569cd6;opacity:.5"></div><div class="mm" style="left:624.62px;top:98.17px;width:3.84px;height:1.0px;background:#569cd6;opacity:.5"></div><div class="mm" style="left:629.10px;top:98.17px;width:1.28px;height:1.0px;background:#569cd6;opacity:.5"></div><div class="mm" style="left:616.30px;top:100.72px;width:1.28px;height:1.0px;background:#9a9a9a;opacity:.5"></div><div class="mm" style="left:618.22px;top:100.72px;width:1.28px;height:1.0px;background:#9a9a9a;opacity:.5"></div><div class="mm" style="left:620.14px;top:100.72px;width:3.84px;height:1.0px;background:#9a9a9a;opacity:.5"></div><div class="mm" style="left:616.30px;top:103.28px;width:1.92px;height:1.0px;background:#6a9955;opacity:.5"></div><div class="mm" style="left:618.86px;top:103.28px;width:3.20px;height:1.0px;background:#6a9955;opacity:.5"></div><div class="mm" style="left:622.70px;top:103.28px;width:1.28px;height:1.0px;background:#6a9955;opacity:.5"></div><div class="mm" style="left:624.62px;top:103.28px;width:4.48px;height:1.0px;background:#6a9955;opacity:.5"></div><div class="mm" style="left:617.58px;top:104.55px;width:3.20px;height:1.0px;background:#b0b0b0;opacity:.5"></div><div class="mm" style="left:621.42px;top:104.55px;width:3.84px;height:1.0px;background:#b0b0b0;opacity:.5"></div><div class="mm" style="left:625.90px;top:104.55px;width:2.56px;height:1.0px;background:#b0b0b0;opacity:.5"></div><div class="mm" style="left:629.10px;top:104.55px;width:0.64px;height:1.0px;background:#b0b0b0;opacity:.5"></div><div class="mm" style="left:616.30px;top:116.03px;width:1.28px;height:1.0px;background:#9cdcfe;opacity:.5"></div><div class="mm" style="left:618.22px;top:116.03px;width:1.92px;height:1.0px;background:#9cdcfe;opacity:.5"></div><div class="mm" style="left:620.78px;top:116.03px;width:1.28px;height:1.0px;background:#9cdcfe;opacity:.5"></div><div class="mm" style="left:622.70px;top:116.03px;width:1.28px;height:1.0px;background:#9cdcfe;opacity:.5"></div><div class="mm" style="left:624.62px;top:116.03px;width:1.92px;height:1.0px;background:#9cdcfe;opacity:.5"></div><div class="mm" style="left:617.58px;top:118.57px;width:1.28px;height:1.0px;background:#569cd6;opacity:.5"></div><div class="mm" style="left:619.50px;top:118.57px;width:1.28px;height:1.0px;background:#569cd6;opacity:.5"></div><div class="mm" style="left:621.42px;top:118.57px;width:4.48px;height:1.0px;background:#569cd6;opacity:.5"></div><div class="mm" style="left:626.54px;top:118.57px;width:1.92px;height:1.0px;background:#569cd6;opacity:.5"></div><div class="mm" style="left:617.58px;top:119.85px;width:2.56px;height:1.0px;background:#4ec9b0;opacity:.5"></div><div class="mm" style="left:620.78px;top:119.85px;width:1.28px;height:1.0px;background:#4ec9b0;opacity:.5"></div><div class="mm" style="left:622.70px;top:119.85px;width:1.92px;height:1.0px;background:#4ec9b0;opacity:.5"></div><div class="mm" style="left:617.58px;top:127.50px;width:1.92px;height:1.0px;background:#9cdcfe;opacity:.5"></div><div class="mm" style="left:620.14px;top:127.50px;width:1.28px;height:1.0px;background:#9cdcfe;opacity:.5"></div><div class="mm" style="left:622.06px;top:127.50px;width:2.56px;height:1.0px;background:#9cdcfe;opacity:.5"></div><div class="mm" style="left:625.26px;top:127.50px;width:1.92px;height:1.0px;background:#9cdcfe;opacity:.5"></div><div class="mm" style="left:627.82px;top:127.50px;width:2.56px;height:1.0px;background:#9cdcfe;opacity:.5"></div><div class="mm" style="left:631.02px;top:127.50px;width:0.00px;height:1.0px;background:#9cdcfe;opacity:.5"></div><div class="mm" style="left:617.58px;top:132.60px;width:4.48px;height:1.0px;background:#b0b0b0;opacity:.5"></div><div class="mm" style="left:622.70px;top:132.60px;width:1.92px;height:1.0px;background:#b0b0b0;opacity:.5"></div><div class="mm" style="left:616.30px;top:137.70px;width:1.92px;height:1.0px;background:#9a9a9a;opacity:.5"></div><div class="mm" style="left:618.86px;top:137.70px;width:3.20px;height:1.0px;background:#9a9a9a;opacity:.5"></div><div class="mm" style="left:622.70px;top:137.70px;width:1.28px;height:1.0px;background:#9a9a9a;opacity:.5"></div><div class="mm" style="left:616.30px;top:142.80px;width:3.84px;height:1.0px;background:#b0b0b0;opacity:.5"></div><div class="mm" style="left:616.30px;top:145.35px;width:4.48px;height:1.0px;background:#9cdcfe;opacity:.5"></div><div class="mm" style="left:621.42px;top:145.35px;width:3.20px;height:1.0px;background:#9cdcfe;opacity:.5"></div><div class="mm" style="left:625.26px;top:145.35px;width:1.28px;height:1.0px;background:#9cdcfe;opacity:.5"></div><div class="mm" style="left:616.30px;top:149.17px;width:3.20px;height:1.0px;background:#4ec9b0;opacity:.5"></div><div class="mm" style="left:618.86px;top:150.45px;width:3.84px;height:1.0px;background:#b0b0b0;opacity:.5"></div><div class="mm" style="left:623.34px;top:150.45px;width:0.64px;height:1.0px;background:#b0b0b0;opacity:.5"></div><div class="mm" style="left:616.30px;top:151.72px;width:4.48px;height:1.0px;background:#4ec9b0;opacity:.5"></div><div class="mm" style="left:621.42px;top:151.72px;width:4.48px;height:1.0px;background:#4ec9b0;opacity:.5"></div><div class="mm" style="left:626.54px;top:151.72px;width:3.84px;height:1.0px;background:#4ec9b0;opacity:.5"></div><div class="mm" style="left:616.30px;top:159.38px;width:3.84px;height:1.0px;background:#6a9955;opacity:.5"></div><div class="mm" style="left:620.78px;top:159.38px;width:1.28px;height:1.0px;background:#6a9955;opacity:.5"></div><div class="mm" style="left:622.70px;top:159.38px;width:3.84px;height:1.0px;background:#6a9955;opacity:.5"></div><div class="mm" style="left:616.30px;top:163.20px;width:1.28px;height:1.0px;background:#9cdcfe;opacity:.5"></div><div class="mm" style="left:618.22px;top:163.20px;width:3.20px;height:1.0px;background:#9cdcfe;opacity:.5"></div><div class="mm" style="left:622.06px;top:163.20px;width:1.28px;height:1.0px;background:#9cdcfe;opacity:.5"></div><div class="mm" style="left:623.98px;top:163.20px;width:4.48px;height:1.0px;background:#9cdcfe;opacity:.5"></div><div class="mm" style="left:618.86px;top:164.47px;width:3.84px;height:1.0px;background:#4ec9b0;opacity:.5"></div><div class="mm" style="left:617.58px;top:169.57px;width:1.92px;height:1.0px;background:#9cdcfe;opacity:.5"></div><div class="mm" style="left:620.14px;top:169.57px;width:1.28px;height:1.0px;background:#9cdcfe;opacity:.5"></div><div class="mm" style="left:616.30px;top:19.12px;width:1.28px;height:1.0px;background:#6a9955"></div><div class="mm" style="left:618.22px;top:19.12px;width:1.92px;height:1.0px;background:#6a9955"></div><div class="mm" style="left:620.78px;top:19.12px;width:1.92px;height:1.0px;background:#6a9955"></div><div class="mm" style="left:623.34px;top:19.12px;width:1.92px;height:1.0px;background:#6a9955"></div><div class="mm" style="left:625.90px;top:19.12px;width:1.92px;height:1.0px;background:#6a9955"></div><div class="mm" style="left:628.46px;top:19.12px;width:4.48px;height:1.0px;background:#6a9955"></div><div class="mm" style="left:616.30px;top:20.40px;width:4.48px;height:1.0px;background:#4ec9b0"></div><div class="mm" style="left:621.42px;top:20.40px;width:6.40px;height:1.0px;background:#9cdcfe"></div><div class="mm" style="left:627.82px;top:20.40px;width:0.64px;height:1.0px;background:#d4d4d4"></div><div class="mm" style="left:628.46px;top:20.40px;width:7.04px;height:1.0px;background:#9cdcfe"></div><div class="mm" style="left:635.50px;top:20.40px;width:1.28px;height:1.0px;background:#d4d4d4"></div><div class="mm" style="left:616.30px;top:22.95px;width:1.28px;height:1.0px;background:#6a9955"></div><div class="mm" style="left:618.22px;top:22.95px;width:5.76px;height:1.0px;background:#6a9955"></div><div class="mm" style="left:624.62px;top:22.95px;width:1.92px;height:1.0px;background:#6a9955"></div><div class="mm" style="left:627.18px;top:22.95px;width:4.48px;height:1.0px;background:#6a9955"></div><div class="mm" style="left:632.30px;top:22.95px;width:3.20px;height:1.0px;background:#6a9955"></div><div class="mm" style="left:616.30px;top:24.22px;width:4.48px;height:1.0px;background:#569cd6"></div><div class="mm" style="left:621.42px;top:24.22px;width:3.84px;height:1.0px;background:#569cd6"></div><div class="mm" style="left:625.90px;top:24.22px;width:0.64px;height:1.0px;background:#d4d4d4"></div><div class="mm" style="left:617.58px;top:25.50px;width:4.48px;height:1.0px;background:#4ec9b0"></div><div class="mm" style="left:622.70px;top:25.50px;width:1.92px;height:1.0px;background:#9cdcfe"></div><div class="mm" style="left:624.62px;top:25.50px;width:0.64px;height:1.0px;background:#d4d4d4"></div><div class="mm" style="left:617.58px;top:26.78px;width:4.48px;height:1.0px;background:#4ec9b0"></div><div class="mm" style="left:622.70px;top:26.78px;width:3.20px;height:1.0px;background:#9cdcfe"></div><div class="mm" style="left:625.90px;top:26.78px;width:0.64px;height:1.0px;background:#d4d4d4"></div><div class="mm" style="left:617.58px;top:28.05px;width:4.48px;height:1.0px;background:#4ec9b0"></div><div class="mm" style="left:622.70px;top:28.05px;width:2.56px;height:1.0px;background:#9cdcfe"></div><div class="mm" style="left:625.26px;top:28.05px;width:0.64px;height:1.0px;background:#d4d4d4"></div><div class="mm" style="left:616.30px;top:29.33px;width:0.64px;height:1.0px;background:#d4d4d4"></div><div class="mm" style="left:617.58px;top:29.33px;width:7.04px;height:1.0px;background:#4ec9b0"></div><div class="mm" style="left:624.62px;top:29.33px;width:0.64px;height:1.0px;background:#d4d4d4"></div><div class="mm" style="left:616.30px;top:31.88px;width:1.28px;height:1.0px;background:#6a9955"></div><div class="mm" style="left:618.22px;top:31.88px;width:3.84px;height:1.0px;background:#6a9955"></div><div class="mm" style="left:622.70px;top:31.88px;width:3.20px;height:1.0px;background:#6a9955"></div><div class="mm" style="left:626.54px;top:31.88px;width:5.12px;height:1.0px;background:#6a9955"></div><div class="mm" style="left:616.30px;top:33.15px;width:3.84px;height:1.0px;background:#569cd6"></div><div class="mm" style="left:620.78px;top:33.15px;width:7.04px;height:1.0px;background:#4ec9b0"></div><div class="mm" style="left:628.46px;top:33.15px;width:7.04px;height:1.0px;background:#9cdcfe"></div><div class="mm" style="left:635.50px;top:33.15px;width:0.64px;height:1.0px;background:#d4d4d4"></div><div class="mm" style="left:616.30px;top:35.70px;width:1.28px;height:1.0px;background:#6a9955"></div><div class="mm" style="left:618.22px;top:35.70px;width:3.84px;height:1.0px;background:#6a9955"></div><div class="mm" style="left:622.70px;top:35.70px;width:2.56px;height:1.0px;background:#6a9955"></div><div class="mm" style="left:625.90px;top:35.70px;width:1.28px;height:1.0px;background:#6a9955"></div><div class="mm" style="left:627.82px;top:35.70px;width:4.48px;height:1.0px;background:#6a9955"></div><div class="mm" style="left:632.94px;top:35.70px;width:1.28px;height:1.0px;background:#6a9955"></div><div class="mm" style="left:634.86px;top:35.70px;width:2.56px;height:1.0px;background:#6a9955"></div><div class="mm" style="left:616.30px;top:36.97px;width:3.84px;height:1.0px;background:#569cd6"></div><div class="mm" style="left:620.78px;top:36.97px;width:2.56px;height:1.0px;background:#569cd6"></div><div class="mm" style="left:623.98px;top:36.97px;width:5.76px;height:1.0px;background:#9cdcfe"></div><div class="mm" style="left:629.74px;top:36.97px;width:0.64px;height:1.0px;background:#d4d4d4"></div><div class="mm" style="left:616.30px;top:39.53px;width:1.28px;height:1.0px;background:#6a9955"></div><div class="mm" style="left:618.22px;top:39.53px;width:2.56px;height:1.0px;background:#6a9955"></div><div class="mm" style="left:621.42px;top:39.53px;width:3.20px;height:1.0px;background:#6a9955"></div><div class="mm" style="left:625.26px;top:39.53px;width:4.48px;height:1.0px;background:#6a9955"></div><div class="mm" style="left:616.30px;top:40.80px;width:3.84px;height:1.0px;background:#569cd6"></div><div class="mm" style="left:620.78px;top:40.80px;width:2.56px;height:1.0px;background:#569cd6"></div><div class="mm" style="left:623.98px;top:40.80px;width:7.04px;height:1.0px;background:#dcdcaa"></div><div class="mm" style="left:631.02px;top:40.80px;width:0.64px;height:1.0px;background:#d4d4d4"></div><div class="mm" style="left:631.66px;top:40.80px;width:3.20px;height:1.0px;background:#569cd6"></div><div class="mm" style="left:635.50px;top:40.80px;width:2.56px;height:1.0px;background:#569cd6"></div><div class="mm" style="left:638.70px;top:40.80px;width:0.64px;height:1.0px;background:#d4d4d4"></div><div class="mm" style="left:639.34px;top:40.80px;width:3.20px;height:1.0px;background:#9cdcfe"></div><div class="mm" style="left:642.54px;top:40.80px;width:0.64px;height:1.0px;background:#d4d4d4"></div><div class="mm" style="left:643.82px;top:40.80px;width:3.20px;height:1.0px;background:#569cd6"></div><div class="mm" style="left:647.66px;top:40.80px;width:2.56px;height:1.0px;background:#569cd6"></div><div class="mm" style="left:650.86px;top:40.80px;width:0.64px;height:1.0px;background:#d4d4d4"></div><div class="mm" style="left:651.50px;top:40.80px;width:2.56px;height:1.0px;background:#9cdcfe"></div><div class="mm" style="left:654.06px;top:40.80px;width:0.64px;height:1.0px;background:#d4d4d4"></div><div class="mm" style="left:616.30px;top:42.07px;width:0.64px;height:1.0px;background:#d4d4d4"></div><div class="mm" style="left:617.58px;top:44.62px;width:1.28px;height:1.0px;background:#6a9955"></div><div class="mm" style="left:619.50px;top:44.62px;width:4.48px;height:1.0px;background:#6a9955"></div><div class="mm" style="left:624.62px;top:44.62px;width:1.28px;height:1.0px;background:#6a9955"></div><div class="mm" style="left:626.54px;top:44.62px;width:3.84px;height:1.0px;background:#6a9955"></div><div class="mm" style="left:631.02px;top:44.62px;width:1.92px;height:1.0px;background:#6a9955"></div><div class="mm" style="left:633.58px;top:44.62px;width:3.84px;height:1.0px;background:#6a9955"></div><div class="mm" style="left:638.06px;top:44.62px;width:6.40px;height:1.0px;background:#6a9955"></div><div class="mm" style="left:645.10px;top:44.62px;width:1.92px;height:1.0px;background:#6a9955"></div><div class="mm" style="left:647.66px;top:44.62px;width:6.40px;height:1.0px;background:#6a9955"></div><div class="mm" style="left:654.70px;top:44.62px;width:5.76px;height:1.0px;background:#6a9955"></div><div class="mm" style="left:617.58px;top:45.90px;width:3.84px;height:1.0px;background:#4ec9b0"></div><div class="mm" style="left:622.06px;top:45.90px;width:7.04px;height:1.0px;background:#9cdcfe"></div><div class="mm" style="left:629.74px;top:45.90px;width:0.64px;height:1.0px;background:#d4d4d4"></div><div class="mm" style="left:631.02px;top:45.90px;width:3.84px;height:1.0px;background:#4ec9b0"></div><div class="mm" style="left:634.86px;top:45.90px;width:0.64px;height:1.0px;background:#d4d4d4"></div><div class="mm" style="left:635.50px;top:45.90px;width:3.20px;height:1.0px;background:#9cdcfe"></div><div class="mm" style="left:638.70px;top:45.90px;width:1.28px;height:1.0px;background:#d4d4d4"></div><div class="mm" style="left:617.58px;top:47.17px;width:3.84px;height:1.0px;background:#4ec9b0"></div><div class="mm" style="left:622.06px;top:47.17px;width:6.40px;height:1.0px;background:#9cdcfe"></div><div class="mm" style="left:629.10px;top:47.17px;width:0.64px;height:1.0px;background:#d4d4d4"></div><div class="mm" style="left:630.38px;top:47.17px;width:3.84px;height:1.0px;background:#4ec9b0"></div><div class="mm" style="left:634.22px;top:47.17px;width:0.64px;height:1.0px;background:#d4d4d4"></div><div class="mm" style="left:634.86px;top:47.17px;width:2.56px;height:1.0px;background:#9cdcfe"></div><div class="mm" style="left:637.42px;top:47.17px;width:1.28px;height:1.0px;background:#d4d4d4"></div><div class="mm" style="left:617.58px;top:49.72px;width:1.28px;height:1.0px;background:#6a9955"></div><div class="mm" style="left:619.50px;top:49.72px;width:5.76px;height:1.0px;background:#6a9955"></div><div class="mm" style="left:625.90px;top:49.72px;width:3.20px;height:1.0px;background:#6a9955"></div><div class="mm" style="left:629.74px;top:49.72px;width:3.20px;height:1.0px;background:#6a9955"></div><div class="mm" style="left:633.58px;top:49.72px;width:1.28px;height:1.0px;background:#6a9955"></div><div class="mm" style="left:635.50px;top:49.72px;width:5.12px;height:1.0px;background:#6a9955"></div><div class="mm" style="left:617.58px;top:51.00px;width:1.28px;height:1.0px;background:#c586c0"></div><div class="mm" style="left:618.86px;top:51.00px;width:0.64px;height:1.0px;background:#d4d4d4"></div><div class="mm" style="left:620.14px;top:51.00px;width:7.04px;height:1.0px;background:#9cdcfe"></div><div class="mm" style="left:627.18px;top:51.00px;width:0.64px;height:1.0px;background:#d4d4d4"></div><div class="mm" style="left:627.82px;top:51.00px;width:3.84px;height:1.0px;background:#dcdcaa"></div><div class="mm" style="left:631.66px;top:51.00px;width:0.64px;height:1.0px;background:#d4d4d4"></div><div class="mm" style="left:632.30px;top:51.00px;width:3.20px;height:1.0px;background:#ce9178"></div><div class="mm" style="left:635.50px;top:51.00px;width:0.64px;height:1.0px;background:#d4d4d4"></div><div class="mm" style="left:636.78px;top:51.00px;width:0.64px;height:1.0px;background:#d4d4d4"></div><div class="mm" style="left:638.06px;top:51.00px;width:0.64px;height:1.0px;background:#d4d4d4"></div><div class="mm" style="left:618.86px;top:52.28px;width:7.04px;height:1.0px;background:#9cdcfe"></div><div class="mm" style="left:625.90px;top:52.28px;width:0.64px;height:1.0px;background:#d4d4d4"></div><div class="mm" style="left:626.54px;top:52.28px;width:1.92px;height:1.0px;background:#9cdcfe"></div><div class="mm" style="left:629.10px;top:52.28px;width:0.64px;height:1.0px;background:#d4d4d4"></div><div class="mm" style="left:630.38px;top:52.28px;width:6.40px;height:1.0px;background:#9cdcfe"></div><div class="mm" style="left:636.78px;top:52.28px;width:0.64px;height:1.0px;background:#d4d4d4"></div><div class="mm" style="left:637.42px;top:52.28px;width:3.20px;height:1.0px;background:#dcdcaa"></div><div class="mm" style="left:640.62px;top:52.28px;width:1.92px;height:1.0px;background:#d4d4d4"></div><div class="mm" style="left:617.58px;top:53.55px;width:0.64px;height:1.0px;background:#d4d4d4"></div><div class="mm" style="left:618.86px;top:53.55px;width:2.56px;height:1.0px;background:#c586c0"></div><div class="mm" style="left:622.06px;top:53.55px;width:1.28px;height:1.0px;background:#c586c0"></div><div class="mm" style="left:623.98px;top:53.55px;width:0.64px;height:1.0px;background:#d4d4d4"></div><div class="mm" style="left:625.26px;top:53.55px;width:7.04px;height:1.0px;background:#9cdcfe"></div><div class="mm" style="left:632.30px;top:53.55px;width:0.64px;height:1.0px;background:#d4d4d4"></div><div class="mm" style="left:632.94px;top:53.55px;width:3.84px;height:1.0px;background:#dcdcaa"></div><div class="mm" style="left:636.78px;top:53.55px;width:0.64px;height:1.0px;background:#d4d4d4"></div><div class="mm" style="left:637.42px;top:53.55px;width:4.48px;height:1.0px;background:#ce9178"></div><div class="mm" style="left:641.90px;top:53.55px;width:0.64px;height:1.0px;background:#d4d4d4"></div><div class="mm" style="left:643.18px;top:53.55px;width:0.64px;height:1.0px;background:#d4d4d4"></div><div class="mm" style="left:644.46px;top:53.55px;width:0.64px;height:1.0px;background:#d4d4d4"></div><div class="mm" style="left:618.86px;top:54.82px;width:7.04px;height:1.0px;background:#9cdcfe"></div><div class="mm" style="left:625.90px;top:54.82px;width:0.64px;height:1.0px;background:#d4d4d4"></div><div class="mm" style="left:626.54px;top:54.82px;width:3.20px;height:1.0px;background:#9cdcfe"></div><div class="mm" style="left:630.38px;top:54.82px;width:0.64px;height:1.0px;background:#d4d4d4"></div><div class="mm" style="left:631.66px;top:54.82px;width:6.40px;height:1.0px;background:#9cdcfe"></div><div class="mm" style="left:638.06px;top:54.82px;width:0.64px;height:1.0px;background:#d4d4d4"></div><div class="mm" style="left:638.70px;top:54.82px;width:3.20px;height:1.0px;background:#dcdcaa"></div><div class="mm" style="left:641.90px;top:54.82px;width:1.92px;height:1.0px;background:#d4d4d4"></div><div class="mm" style="left:617.58px;top:56.10px;width:0.64px;height:1.0px;background:#d4d4d4"></div><div class="mm" style="left:618.86px;top:56.10px;width:2.56px;height:1.0px;background:#c586c0"></div><div class="mm" style="left:622.06px;top:56.10px;width:1.28px;height:1.0px;background:#c586c0"></div><div class="mm" style="left:623.98px;top:56.10px;width:0.64px;height:1.0px;background:#d4d4d4"></div><div class="mm" style="left:625.26px;top:56.10px;width:7.04px;height:1.0px;background:#9cdcfe"></div><div class="mm" style="left:632.30px;top:56.10px;width:0.64px;height:1.0px;background:#d4d4d4"></div><div class="mm" style="left:632.94px;top:56.10px;width:3.84px;height:1.0px;background:#dcdcaa"></div><div class="mm" style="left:636.78px;top:56.10px;width:0.64px;height:1.0px;background:#d4d4d4"></div><div class="mm" style="left:637.42px;top:56.10px;width:3.84px;height:1.0px;background:#ce9178"></div><div class="mm" style="left:641.26px;top:56.10px;width:0.64px;height:1.0px;background:#d4d4d4"></div><div class="mm" style="left:642.54px;top:56.10px;width:0.64px;height:1.0px;background:#d4d4d4"></div><div class="mm" style="left:643.82px;top:56.10px;width:0.64px;height:1.0px;background:#d4d4d4"></div><div class="mm" style="left:618.86px;top:57.38px;width:7.04px;height:1.0px;background:#9cdcfe"></div><div class="mm" style="left:625.90px;top:57.38px;width:0.64px;height:1.0px;background:#d4d4d4"></div><div class="mm" style="left:626.54px;top:57.38px;width:2.56px;height:1.0px;background:#9cdcfe"></div><div class="mm" style="left:629.74px;top:57.38px;width:0.64px;height:1.0px;background:#d4d4d4"></div><div class="mm" style="left:631.02px;top:57.38px;width:6.40px;height:1.0px;background:#9cdcfe"></div><div class="mm" style="left:637.42px;top:57.38px;width:0.64px;height:1.0px;background:#d4d4d4"></div><div class="mm" style="left:638.06px;top:57.38px;width:3.20px;height:1.0px;background:#dcdcaa"></div><div class="mm" style="left:641.26px;top:57.38px;width:1.92px;height:1.0px;background:#d4d4d4"></div><div class="mm" style="left:617.58px;top:58.65px;width:0.64px;height:1.0px;background:#d4d4d4"></div><div class="mm" style="left:618.86px;top:58.65px;width:2.56px;height:1.0px;background:#c586c0"></div><div class="mm" style="left:622.06px;top:58.65px;width:0.64px;height:1.0px;background:#d4d4d4"></div><div class="mm" style="left:618.86px;top:59.92px;width:3.84px;height:1.0px;background:#c586c0"></div><div class="mm" style="left:622.70px;top:59.92px;width:0.64px;height:1.0px;background:#d4d4d4"></div><div class="mm" style="left:617.58px;top:61.20px;width:0.64px;height:1.0px;background:#d4d4d4"></div>
</div></div>
<div id="shadow" class="a"></div>
<div class="sbt" style="left:56.3px">0</div><div class="sbt" style="left:74.7px">0</div><div class="sbt" style="left:167.0px">xenon</div><div class="sbt" style="left:198.6px">deviceOS@1.3.0-rc.1</div><div class="sbt" style="left:283.4px">turkey_bacon</div><div class="sbt" style="left:341.2px">(Global Scope)</div><div class="sbt" style="left:403.9px">Ln 19, Col 31</div><div class="sbt" style="left:461.2px">Spaces: 2</div><div class="sbt" style="left:506.8px">UTF-8</div><div class="sbt" style="left:540.1px">LF</div><div class="sbt" style="left:559.0px">C++</div><div class="sbt" style="left:584.8px">Mac</div><div class="sbt" style="left:621.3px;letter-spacing:0.5px">[off]</div><div class="sbt" style="left:676.2px">10</div>

<svg class="a" style="left:0;top:0" width="730" height="527" viewBox="0 0 730 527">
 <!-- explorer -->
 <g fill="none" stroke="#b0b0b0" stroke-width="1.8" stroke-linejoin="miter">
  <path d="M45.7,50.4 H50.9 L53.9,53.4 V60.7 H45.7 Z"/>
  <path d="M48.9,47.9 H54 L56.3,50.2 V59.3"/>
 </g>
 <path d="M50.9,50.4 V53.4 H53.9 Z" fill="#b0b0b0"/>
 <!-- scm -->
 <g fill="none" stroke="#b0b0b0" stroke-width="1.7">
  <circle cx="47.5" cy="79.6" r="2.1"/><circle cx="55.5" cy="79.6" r="2.1"/><circle cx="51.4" cy="92.4" r="2.1"/>
  <path d="M47.6,81.6 V82.6 C47.8,84.6 51.4,85.6 51.4,87.6 C51.4,85.6 55.2,84.6 55.4,82.6 V81.6 M51.4,86.5 V90.3" stroke-width="2.2"/>
 </g>
 <!-- debug -->
 <circle cx="51.6" cy="118.1" r="8.0" fill="none" stroke="#b0b0b0" stroke-width="1.7"/>
 <g fill="#b0b0b0">
  <ellipse cx="51.6" cy="118.8" rx="3.9" ry="4.4"/>
  <path d="M50.2,111.8 h0.9 v2.4 h-0.9z M53.2,111.6 h0.9 v2.6 h-0.9z M44.8,117.4 h3 v0.9 h-3z M55.4,115.1 h2.8 v0.9 h-2.8z M55.2,119.6 h2.6 v0.9 h-2.6z M50.9,123 h0.9 v1.8 h-0.9z M46.2,121.4 l2,-1 l0.4,0.8 l-2,1z"/>
 </g>
 <path d="M45.6,112.3 L57.6,123.7" stroke="#303030" stroke-width="2.5"/>
 <path d="M45.8,112.5 L57.4,123.5" stroke="#b0b0b0" stroke-width="1.4"/>
 <!-- extensions -->
 <path fill="#b0b0b0" fill-rule="evenodd" d="M44.4,142.8 H51.3 V145.9 H47.3 V153.9 H51.3 V156.8 H44.4 Z M52.2,142.8 H58.8 V149.3 H55.9 V145.9 H52.2 Z M55.9,150.1 H58.8 V156.8 H52.2 V153.9 H55.9 Z"/>
 <rect x="48.1" y="146.8" width="7.2" height="6.4" fill="#b0b0b0"/>
 <!-- particle -->
 <g fill="#b0b0b0">
  <path d="M44.7,174.7 L51.5,178.6 L58.3,174.7 L54.4,181.5 L58.3,188.3 L51.5,184.4 L44.7,188.3 L48.6,181.5 Z"/>
  <path d="M51.5,171.4 L52.5,176.2 L51.5,177.2 L50.5,176.2 Z M51.5,191.6 L52.5,186.8 L51.5,185.8 L50.5,186.8 Z M41.4,181.5 L46.2,180.5 L47.2,181.5 L46.2,182.5 Z M61.6,181.5 L56.8,180.5 L55.8,181.5 L56.8,182.5 Z"/>
 </g>
 <!-- docker -->
 <g fill="#b0b0b0">
  <path d="M42.9,213.4 H56.6 C57.2,212.4 57.6,211.2 58.2,210.6 C58.7,211.4 59,212.3 59.1,213 C59.6,213 60,213.1 60.3,213.3 C59.8,214 59.2,214.3 58.4,214.4 C57.2,218 53.5,220.2 49,220.2 C45,220.2 43.2,217 42.9,213.4 Z"/>
  <rect x="44.6" y="211.2" width="10.4" height="1.7"/>
  <rect x="46.8" y="209.2" width="5.9" height="1.7"/>
  <rect x="51" y="207.2" width="1.9" height="1.7"/>
 </g>
 <!-- gear -->
 <g transform="translate(51.5,449.9)">
  <path fill="#b0b0b0" fill-rule="evenodd" d="M-1.39,-4.49 L-1.46,-6.85 L1.46,-6.85 L1.39,-4.49 L2.19,-4.16 L3.81,-5.87 L5.87,-3.81 L4.16,-2.19 L4.49,-1.39 L6.85,-1.46 L6.85,1.46 L4.49,1.39 L4.16,2.19 L5.87,3.81 L3.81,5.87 L2.19,4.16 L1.39,4.49 L1.46,6.85 L-1.46,6.85 L-1.39,4.49 L-2.19,4.16 L-3.81,5.87 L-5.87,3.81 L-4.16,2.19 L-4.49,1.39 L-6.85,1.46 L-6.85,-1.46 L-4.49,-1.39 L-4.16,-2.19 L-5.87,-3.81 L-3.81,-5.87 L-2.19,-4.16 Z M1.9,0 A1.9,1.9 0 1 0 -1.9,0 A1.9,1.9 0 1 0 1.9,0 Z"/>
 </g>
 <!-- toolbar circles -->
 <g fill="#c8c8c8">
  <circle cx="581.1" cy="49.6" r="5.2"/><circle cx="601" cy="49.6" r="5.2"/><circle cx="621.9" cy="49.6" r="5.2"/><circle cx="642.1" cy="49.6" r="5.2"/>
 </g>
 <g fill="none" stroke="#262626" stroke-width="1.6" stroke-linecap="round" stroke-linejoin="round">
  <path d="M578.8,49.9 L580.5,51.6 L583.5,47.8"/>
  <path d="M640.5,47.3 L642.1,51.8 L643.7,47.3"/>
 </g>
 <path fill="#262626" d="M602.3,46 L598.9,50.3 H600.8 L599.9,53.2 L603.2,48.9 H601.3 Z"/>
 <path fill="none" stroke="#262626" stroke-width="1.25" stroke-linecap="round" d="M624.2,46.9 C623.7,46.2 622.6,46.3 622.3,47.5 L621.4,51.8 C621.1,52.9 620.4,53.2 619.7,52.7 M620.5,49.3 H623.3"/>
 <!-- split -->
 <g fill="none" stroke="#c8c8c8">
  <rect x="658.4" y="46.5" width="8.3" height="6.8" stroke-width="1"/>
  <path d="M662.5,46.5 V53.3" stroke-width="0.9"/>
  <path d="M658.4,46.6 H666.7" stroke-width="1.6"/>
 </g>
 <g fill="#c8c8c8"><circle cx="679.8" cy="49.3" r="0.95"/><circle cx="683.1" cy="49.3" r="0.95"/><circle cx="686.4" cy="49.3" r="0.95"/></g>
 <!-- tab icon -->
 <path d="M82.2,47.4 A3.1,3.1 0 1 0 82.2,51.9" fill="none" stroke="#6aa6c8" stroke-width="1.9"/>
 <path d="M80.6,49.65 h1.3 M82.5,49.65 h1.4" stroke="#6aa6c8" stroke-width="0.8"/>
 <!-- tab close -->
 <path d="M145.1,47.4 L149.3,51.6 M149.3,47.4 L145.1,51.6" stroke="#e8e8e8" stroke-width="1.5"/>
 <!-- breadcrumb -->
 <path d="M93.3,66 L96,68 L93.3,70 Z" fill="#a8a8a8"/>
 <path d="M108.4,66.0 A3.1,3.1 0 1 0 108.4,70.5" fill="none" stroke="#6aa6c8" stroke-width="1.9"/>
 <path d="M106.8,68.25 h1.3 M108.7,68.25 h1.4" stroke="#6aa6c8" stroke-width="0.8"/>
 <path d="M168,65.8 L170.8,67.9 L168,70 Z" fill="#a8a8a8"/>
 <!-- status icons -->
 <circle cx="49.8" cy="472.7" r="4.1" fill="#fff"/>
 <path d="M48.2,471.1 L51.4,474.3 M51.4,471.1 L48.2,474.3" stroke="#0f7fd5" stroke-width="1.1"/>
 <path d="M67.7,468.4 L71.8,476.1 H63.6 Z" fill="#fff" stroke="#fff" stroke-width="0.5" stroke-linejoin="round"/>
 <path d="M67.7,471 V473.8 M67.7,474.6 V475.4" stroke="#0f7fd5" stroke-width="0.9"/>
 <path d="M610.4,472.6 C611.8,470.3 613,469.8 614.7,469.8 C616.4,469.8 617.6,470.3 619,472.6 C617.6,474.9 616.4,475.4 614.7,475.4 C613,475.4 611.8,474.9 610.4,472.6 Z" fill="none" stroke="#fff" stroke-width="1.1"/>
 <circle cx="614.7" cy="472.6" r="1.3" fill="#fff"/>
 <circle cx="651.7" cy="472.6" r="4" fill="#fff"/>
 <g fill="#0f7fd5"><circle cx="650.2" cy="471.6" r="0.6"/><circle cx="653.2" cy="471.6" r="0.6"/></g>
 <path d="M649.7,473.5 Q651.7,475.6 653.7,473.5" fill="none" stroke="#0f7fd5" stroke-width="0.8"/>
 <path d="M669.5,468.6 C667.6,468.6 667,470.2 667,471.8 V474 L666.2,475.2 H672.8 L672,474 V471.8 C672,470.2 671.4,468.6 669.5,468.6 Z M668.6,475.8 H670.4 C670.4,476.5 670,476.9 669.5,476.9 C669,476.9 668.6,476.5 668.6,475.8Z" fill="#fff"/>
 <!-- scrollbar -->
 <rect x="684.6" y="74.4" width="0.8" height="391.20000000000005" fill="#2a2a2a"/>
 <rect x="685.4" y="107.6" width="9.6" height="78.8" fill="#474747"/>
 <rect x="685.4" y="115.4" width="9.6" height="1.2" fill="#8a8a8a"/>
 <!-- arrows -->
 <g fill="none" stroke="#e8432c" stroke-width="4.3" stroke-linecap="round" stroke-linejoin="round">
  <path d="M167.6,427.6 C173.5,430.5 177.3,437.5 176.9,445.5 C176.6,451 175.5,455.5 173.6,460.2"/>
  <path d="M161.8,449.8 C164.5,455 168,460.8 173.2,461.2 C177,460.8 181,456.5 184.2,453.6"/>
  <path d="M229.4,433.2 C229.2,443 228.6,455 227.8,466.4"/>
  <path d="M213.2,454 C216.5,460 220.5,467.2 226.8,467.6 C231.5,467.2 236,460.5 239.6,454.6"/>
  <path d="M303.6,441.4 C303.1,450 302.2,460 301.2,468.2"/>
  <path d="M293.4,458.2 C295.5,462.5 297.8,468.6 300.6,469 C304.5,467 309.5,460 313.6,455"/>
 </g>
</svg>

</body></html>
